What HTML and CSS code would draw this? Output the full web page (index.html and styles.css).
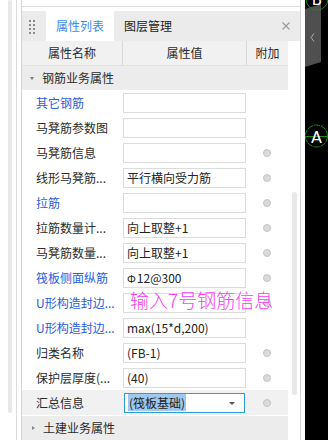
FILE: index.html
```html
<!DOCTYPE html>
<html lang="zh-CN">
<head>
  <meta charset="UTF-8" />
  <title>属性列表</title>
  <link rel="stylesheet" href="styles.css">
</head>
<body>
  <div class="app">
    <div class="side"><div class="side-track"></div></div>

    <div class="frame">
      <div class="panel">
        <div class="panel-top"></div>

        <div class="tabs">
          <div class="grip">
            <i></i><i></i><i></i><i></i><i></i><i></i><i></i><i></i>
          </div>
          <div class="tab active">属性列表</div>
          <div class="tab">图层管理</div>
          <svg class="close" width="8" height="8" viewBox="0 0 8 8">
            <path d="M0.5 0.5 L7.5 7.5 M7.5 0.5 L0.5 7.5" stroke="#9a9a9a" stroke-width="1.1" fill="none"/>
          </svg>
        </div>

        <div class="body">
          <div class="grid">
            <div class="head">
              <div class="c1">属性名称</div>
              <div class="c2">属性值</div>
              <div class="c3">附加</div>
            </div>

            <div class="group"><span class="tri-down"></span>钢筋业务属性</div>

            <div class="row">
              <div class="name link">其它钢筋</div>
              <div class="val"><div class="box"></div></div>
              <div class="extra"></div>
            </div>
            <div class="row">
              <div class="name">马凳筋参数图</div>
              <div class="val"><div class="box"></div></div>
              <div class="extra"></div>
            </div>
            <div class="row">
              <div class="name">马凳筋信息</div>
              <div class="val"><div class="box"></div></div>
              <div class="extra"><span class="dot"></span></div>
            </div>
            <div class="row">
              <div class="name">线形马凳筋...</div>
              <div class="val"><div class="box">平行横向受力筋</div></div>
              <div class="extra"><span class="dot"></span></div>
            </div>
            <div class="row">
              <div class="name link">拉筋</div>
              <div class="val"><div class="box"></div></div>
              <div class="extra"><span class="dot"></span></div>
            </div>
            <div class="row">
              <div class="name">拉筋数量计...</div>
              <div class="val"><div class="box">向上取整+1</div></div>
              <div class="extra"><span class="dot"></span></div>
            </div>
            <div class="row">
              <div class="name">马凳筋数量...</div>
              <div class="val"><div class="box">向上取整+1</div></div>
              <div class="extra"><span class="dot"></span></div>
            </div>
            <div class="row">
              <div class="name link">筏板侧面纵筋</div>
              <div class="val"><div class="box"><span class="bar">Φ</span>12@300</div></div>
              <div class="extra"><span class="dot"></span></div>
            </div>
            <div class="row">
              <div class="name link">U形构造封边...</div>
              <div class="val"><div class="box"></div></div>
              <div class="extra"><span class="dot"></span></div>
              <div class="note">输入7号钢筋信息</div>
            </div>
            <div class="row">
              <div class="name link">U形构造封边...</div>
              <div class="val"><div class="box">max(15*d,200)</div></div>
              <div class="extra"></div>
            </div>
            <div class="row">
              <div class="name">归类名称</div>
              <div class="val"><div class="box">(FB-1)</div></div>
              <div class="extra"><span class="dot"></span></div>
            </div>
            <div class="row">
              <div class="name">保护层厚度(...</div>
              <div class="val"><div class="box">(40)</div></div>
              <div class="extra"><span class="dot"></span></div>
            </div>
            <div class="row selected">
              <div class="name">汇总信息</div>
              <div class="val">
                <div class="box focus"><span class="hl">(筏板基础)</span><span class="caret"></span></div>
              </div>
              <div class="extra"><span class="dot"></span></div>
            </div>

            <div class="group last"><span class="tri-right"></span>土建业务属性</div>
          </div>

          <div class="vscroll"><div class="thumb"></div></div>
        </div>
      </div>
    </div>

    <div class="canvas">
      <svg width="23" height="440" viewBox="0 0 23 440">
        <rect x="0" y="0" width="23" height="440" fill="#000"/>
        <polygon points="0,9 16,4 16,62 0,67" fill="#4f4f4f"/>
        <polyline points="9,33.5 6,37.5 9,41.5" fill="none" stroke="#b0b0b0" stroke-width="1"/>
        <circle cx="12" cy="-1" r="11" fill="none" stroke="#1b8a1b" stroke-width="1"/>
        <text x="12" y="5" fill="#fff" font-family="DejaVu Sans, sans-serif" font-size="15" text-anchor="middle">B</text>
        <circle cx="11.5" cy="136" r="11" fill="none" stroke="#1b8a1b" stroke-width="1" stroke-dasharray="6 1"/>
        <line x1="0" y1="136.5" x2="23" y2="136.5" stroke="#1b8a1b" stroke-width="1"/>
        <text x="11.5" y="143" fill="#fff" font-family="DejaVu Sans, sans-serif" font-size="16" text-anchor="middle">A</text>
      </svg>
    </div>
  </div>
</body>
</html>
```

FILE: styles.css
```css
* {
  box-sizing: border-box;
}

body {
  margin: 0;
  padding: 0;
  font-family: "Noto Sans CJK SC", "Microsoft YaHei", sans-serif;
  font-size: 12px;
  color: #2b2b2b;
  background: #fff;
}

.app {
  display: flex;
  width: 328px;
  height: 440px;
  overflow: hidden;
}

/* outer left strip */
.side {
  width: 16px;
  padding-left: 8px;
  background: #fff;
}

.side-track {
  width: 4px;
  height: 413px;
  background: #e8e8e8;
  border-radius: 2px;
}

.frame {
  width: 289px;
  border-left: 1px solid #dadada;
  padding: 0 4px;
}

.panel {
  width: 280px;
  height: 440px;
  border-left: 1px solid #d4d4d4;
  border-right: 1px solid #d4d4d4;
  display: flex;
  flex-direction: column;
}

.panel-top {
  height: 7px;
  border-bottom: 1px solid #dcdcdc;
  margin-bottom: 4px;
}

/* tab bar */
.tabs {
  height: 30px;
  background: #ebebeb;
  display: flex;
  align-items: center;
}

.grip {
  display: grid;
  grid-template-columns: 2px 2px;
  grid-auto-rows: 2px;
  gap: 2px;
  margin-left: 7px;
  margin-top: 1px;
}

.grip i {
  background: #8c8c8c;
}

.tab {
  height: 30px;
  width: 68px;
  line-height: 30px;
  text-align: center;
  color: #222;
}

.tab.active {
  margin-left: 11px;
  background: #fff;
  color: #3a8aea;
}

.tab + .tab {
  margin-left: 0;
  width: 58px;
  text-align: right;
}

.close {
  margin-left: auto;
  margin-right: 10px;
}

/* property grid */
.body {
  flex: 1;
  display: flex;
}

.grid {
  width: 266px;
}

.head {
  display: flex;
  height: 25px;
  background: #f1f1f1;
  border-bottom: 1px solid #e2e2e2;
  line-height: 24px;
  text-align: center;
}

.head .c1 {
  width: 101px;
  border-right: 1px solid #d8d8d8;
}

.head .c2 {
  width: 124px;
  border-right: 1px solid #d8d8d8;
}

.head .c3 {
  width: 41px;
}

.group {
  height: 24px;
  line-height: 24px;
  background: #ececec;
  padding-left: 8px;
  display: flex;
  align-items: center;
}

.group.last {
  margin-top: 1px;
}

.tri-down {
  width: 0;
  height: 0;
  border-left: 2.5px solid transparent;
  border-right: 2.5px solid transparent;
  border-top: 3px solid #777;
  margin-right: 8px;
}

.tri-right {
  width: 0;
  height: 0;
  border-top: 2.5px solid transparent;
  border-bottom: 2.5px solid transparent;
  border-left: 3px solid #888;
  margin-left: 2px;
  margin-right: 8px;
}

.row {
  position: relative;
  display: flex;
  height: 25px;
}

.row.selected {
  background: #f1f1f1;
}

.name {
  width: 101px;
  padding-left: 14px;
  line-height: 25px;
  white-space: nowrap;
  color: #2b2b2b;
}

.name.link {
  color: #2a5de2;
}

.val {
  width: 123px;
  padding-top: 3px;
}

.box {
  height: 20px;
  border: 1px solid #dcdcdc;
  background: #fff;
  padding-left: 3px;
  line-height: 18px;
  white-space: nowrap;
  overflow: hidden;
  color: #222;
}

.box.focus {
  position: relative;
  margin-left: 1px;
  width: 121px;
  border-color: #2c9bd6;
}

.hl {
  background: #9fc8ee;
  padding: 0 1px;
}

.caret {
  position: absolute;
  right: 9px;
  top: 8px;
  width: 0;
  height: 0;
  border-left: 3px solid transparent;
  border-right: 3px solid transparent;
  border-top: 3px solid #555;
}

.bar {
  font-size: 11px;
  margin-right: 1px;
}

.extra {
  width: 42px;
  display: flex;
  align-items: center;
  justify-content: center;
}

.dot {
  width: 8px;
  height: 8px;
  border-radius: 50%;
  background: #dadada;
  border: 1px solid #c4c4c4;
}

.note {
  position: absolute;
  left: 108px;
  top: 0;
  font-size: 19px;
  font-weight: 300;
  line-height: 19px;
  color: #f43ef4;
  white-space: nowrap;
}

.vscroll {
  width: 12px;
  padding-left: 4px;
  padding-top: 151px;
}

.thumb {
  width: 5px;
  height: 203px;
  background: #e8e8e8;
  border-radius: 3px;
}

/* drawing canvas edge */
.canvas {
  width: 23px;
  height: 440px;
  background: #000;
}

.canvas svg {
  display: block;
}
```
